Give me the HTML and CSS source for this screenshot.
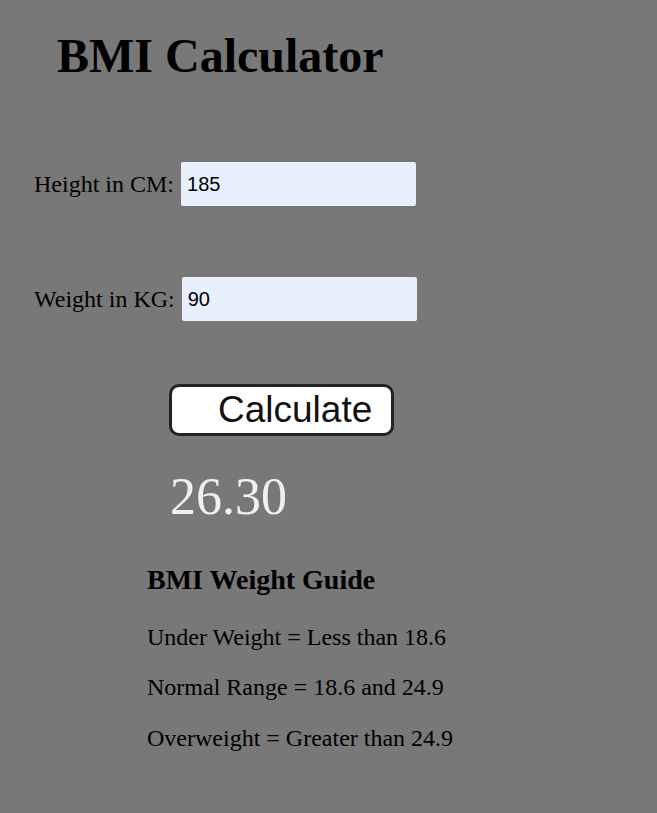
FILE: index.html
```html
<!DOCTYPE html>
<html lang="en">
<head>
<meta charset="utf-8">
<title>BMI Calculator</title>
<link rel="stylesheet" href="styles.css">
</head>
<body>
<main class="page">
  <h1 class="title">BMI Calculator</h1>
  <form class="form">
    <div class="row row-height">
      <label class="label" for="h">Height in CM:</label>
      <input class="field" id="h" type="text" value="185">
    </div>
    <div class="row row-weight">
      <label class="label" for="w">Weight in KG:</label>
      <input class="field field-w" id="w" type="text" value="90">
    </div>
    <button class="calc" type="button">Calculate</button>
  </form>
  <div class="result">26.30</div>
  <section class="guide">
    <h2 class="guide-title">BMI Weight Guide</h2>
    <p class="guide-line">Under Weight = Less than 18.6</p>
    <p class="guide-line">Normal Range = 18.6 and 24.9</p>
    <p class="guide-line">Overweight = Greater than 24.9</p>
  </section>
</main>
</body>
</html>
```

FILE: styles.css
```css
html, body {
  margin: 0;
  padding: 0;
  background: #787878;
}
body {
  font-family: "Liberation Serif", "Times New Roman", serif;
  color: #000;
}
.page {
  display: flex;
  flex-direction: column;
  align-items: flex-start;
  padding-top: 28px;
}
.title {
  margin: 0 0 0 57px;
  font-size: 48px;
  line-height: 56px;
  font-weight: bold;
}
.form {
  display: flex;
  flex-direction: column;
  align-items: flex-start;
  margin: 78px 0 0 34px;
}
.row {
  display: flex;
  align-items: center;
  gap: 7px;
}
.row-weight {
  margin-top: 71px;
}
.label {
  font-size: 24px;
  line-height: 28px;
}
.field {
  box-sizing: border-box;
  width: 235px;
  height: 44px;
  border: none;
  border-radius: 2px;
  background: #e8f0fe;
  padding: 0 6px;
  font-family: "Liberation Sans", Arial, sans-serif;
  font-size: 20px;
  color: #000;
  outline: none;
}
.calc {
  box-sizing: border-box;
  margin: 63px 0 0 135px;
  width: 225px;
  height: 52px;
  border: 3px solid #222;
  border-radius: 10px;
  background: #fff;
  padding: 0 0 0 46px;
  text-align: left;
  font-family: "Liberation Sans", Arial, sans-serif;
  font-size: 37px;
  line-height: 44px;
  color: #111;
}
.result {
  margin: 32.5px 0 0 170px;
  font-size: 52px;
  line-height: 56px;
  color: #f0f0f0;
}
.guide {
  margin: 39px 0 0 147px;
  display: flex;
  flex-direction: column;
  align-items: flex-start;
}
.guide-title {
  margin: 0;
  font-size: 28px;
  line-height: 32px;
  font-weight: bold;
}
.guide-line {
  margin: 27.4px 0 0 0;
  font-size: 24px;
  line-height: 28px;
}
.guide-line + .guide-line {
  margin-top: 22.6px;
}
```
